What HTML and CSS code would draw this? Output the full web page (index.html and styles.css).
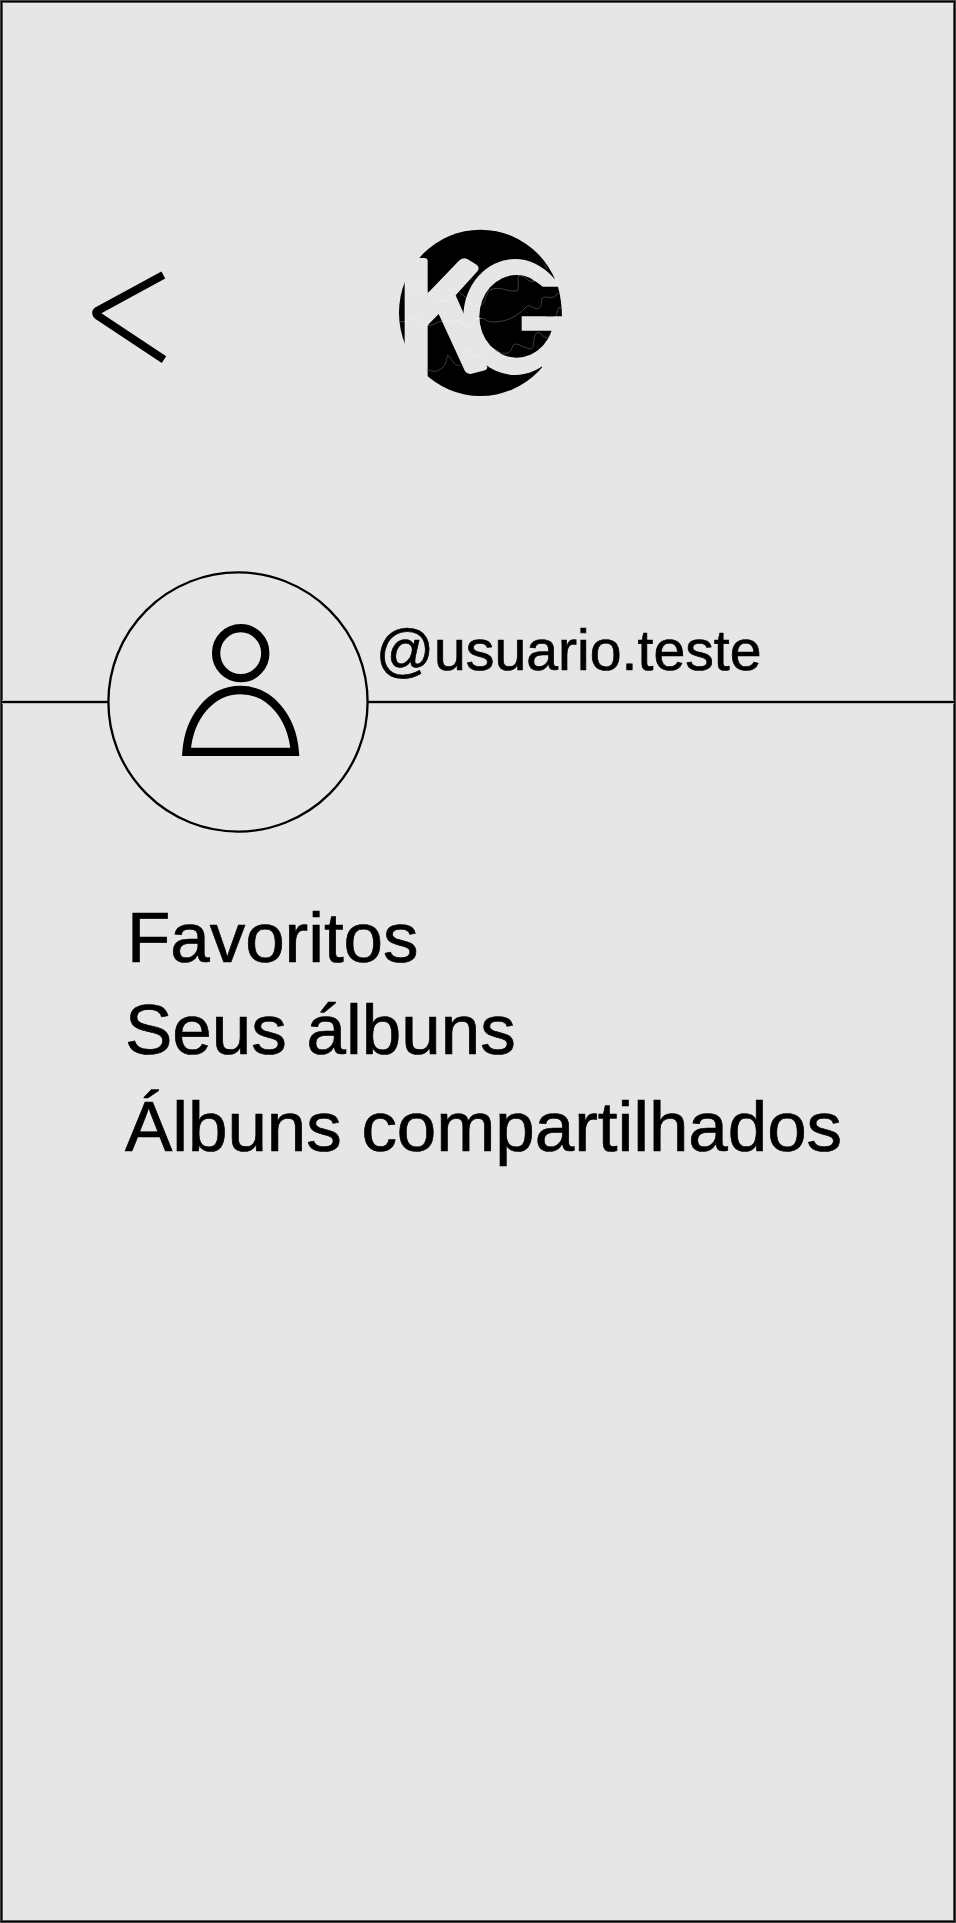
FILE: index.html
```html
<!DOCTYPE html>
<html lang="pt-BR">
<head>
<meta charset="utf-8">
<title>Perfil</title>
<link rel="stylesheet" href="styles.css">
</head>
<body>
<main class="screen">
  <header class="topbar">
    <svg class="back" viewBox="0 0 300 330" role="img" aria-label="Voltar">
      <path d="M250 45L53 152Q44 158 53 167L252 299"/>
    </svg>
    <svg class="logo" viewBox="0 0 600 570" role="img" aria-label="KG">
      <ellipse cx="301.500" cy="293.500" rx="244.500" ry="249.500"/>
      <g class="cut">
        <path d="M74 129H132Q143 129 143 139V499H74Z"/>
        <path d="M136 242L143 235L236 138Q248 125 262 132L290 149Q300 157 293 168L227 241L250 293L322 456Q323 463 315 466L272 477Q261 478 255 469L176 297L143 331L136 338Z"/>
        <ellipse cx="405" cy="306" rx="155" ry="174"/>
      </g>
      <ellipse cx="410" cy="304" rx="112" ry="124"/>
      <path class="cut" d="M487 213L450 188L490 162Q508 173 525 193H560V216H490ZM425 304H560V347H425ZM516 345H570V456H487L455 420Q500 395 516 347Z"/>
      <path d="M486 215H534Q545 255 546 304H498Z"/>
      <g class="waves dim">
        <path d="M302 270C318 268 314 236 330 225C358 210 385 234 412 227C420 210 408 184 420 180C438 184 442 202 459 199"/>
        <path d="M300 310C320 309 315 321 338 321C382 320 410 306 438 276C452 264 460 285 475 280C490 272 480 250 490 247C505 244 523 254 530 238L541 233"/>
        <path d="M360 414C380 418 394 414 397 395C405 376 427 397 450 402C466 402 458 367 468 355C480 344 487 370 503 368L512 360M528 304L536 278H544"/>
        <path d="M140 466C155 463 158 474 176 466C204 450 196 434 203 421C216 428 218 452 239 452"/>
        <path d="M236 230L258 248M146 331C168 328 168 320 187 319M57 320H74M491 148Q499 151 501 162"/>
      </g>
      <g class="waves light">
        <path d="M76 208C94 219 98 238 110 238C122 234 115 211 126 211C136 215 138 234 150 237C172 229 174 260 195 259C219 253 207 223 227 221"/>
        <path d="M74 320C92 318 99 302 111 308C120 316 117 330 146 331M187 319H240C255 322 248 338 262 337C280 337 277 310 302 310"/>
        <path d="M250 424C252 407 254 404 264 410C275 419 282 431 299 424C318 416 317 399 335 399Q347 404 360 414"/>
        <path d="M258 248C270 264 277 280 302 270M459 199C474 190 461 170 470 157"/>
      </g>
    </svg>
  </header>

  <section class="profile">
    <svg class="avatar" viewBox="0 0 280 280" role="img" aria-label="Foto do usuário">
      <circle class="ring" cx="138" cy="142" r="129.600"/>
      <ellipse class="person" cx="140.700" cy="93.200" rx="24.600" ry="25"/>
      <path class="person" d="M86.500 191.800C89 157 111 130 140.500 130S192 157 194.800 191.800Z"/>
    </svg>
    <h1 class="username">@usuario.teste</h1>
  </section>

  <nav class="menu">
    <a class="item first">Favoritos</a>
    <a class="item">Seus álbuns</a>
    <a class="item shared">Álbuns compartilhados</a>
  </nav>
</main>
</body>
</html>
```
FILE: styles.css
```css
* {
  box-sizing: border-box;
}

body {
  margin: 0;
  background: #e6e6e6;
  color: #000;
  font-family: "Liberation Sans", Arial, sans-serif;
}

.screen {
  height: 1923px;
  padding-top: 215px;
  display: flex;
  flex-direction: column;
  box-shadow: inset 0 0 0 1px #444, inset 0 0 0 2px #000, inset 0 0 0 3px #555;
}

.topbar {
  display: flex;
  align-items: flex-start;
  gap: 200px;
  height: 190px;
  padding-left: 80px;
}

.back {
  width: 100px;
  height: 110px;
  margin-top: 45px;
  fill: none;
  stroke: #000;
  stroke-width: 24;
}

.logo {
  width: 200px;
  height: 190px;
}

.cut {
  fill: #e6e6e6;
}

.waves {
  fill: none;
  stroke-width: 1.8;
}

.dim {
  stroke: #666;
}

.light {
  stroke: #f5f5f5;
}

.profile {
  display: flex;
  align-items: flex-start;
  height: 280px;
  margin: 155px 2px 0;
  padding-left: 98px;
  background:
    linear-gradient(#000, #000) 0 141px / 100% 2px no-repeat,
    linear-gradient(#bbb, #bbb) 0 140px / 100% 4px no-repeat;
}

.avatar {
  width: 280px;
  height: 280px;
  flex: none;
}

.ring {
  fill: #e6e6e6;
  stroke: #000;
  stroke-width: 2.3;
}

.person {
  fill: none;
  stroke: #000;
  stroke-width: 8.3;
}

.username {
  margin: 60px 0 0 -4px;
  font-size: 57.2px;
  font-weight: 400;
  line-height: 61px;
  -webkit-text-stroke: 0.7px #000;
}

.menu {
  display: flex;
  flex-direction: column;
  margin-top: 52px;
  padding-left: 125px;
  font-size: 71px;
  line-height: 92px;
  -webkit-text-stroke: 0.7px #000;
}

.first {
  padding-left: 2px;
  letter-spacing: -0.06px;
}

.shared {
  margin-top: 5px;
  letter-spacing: -0.06px;
}
```
